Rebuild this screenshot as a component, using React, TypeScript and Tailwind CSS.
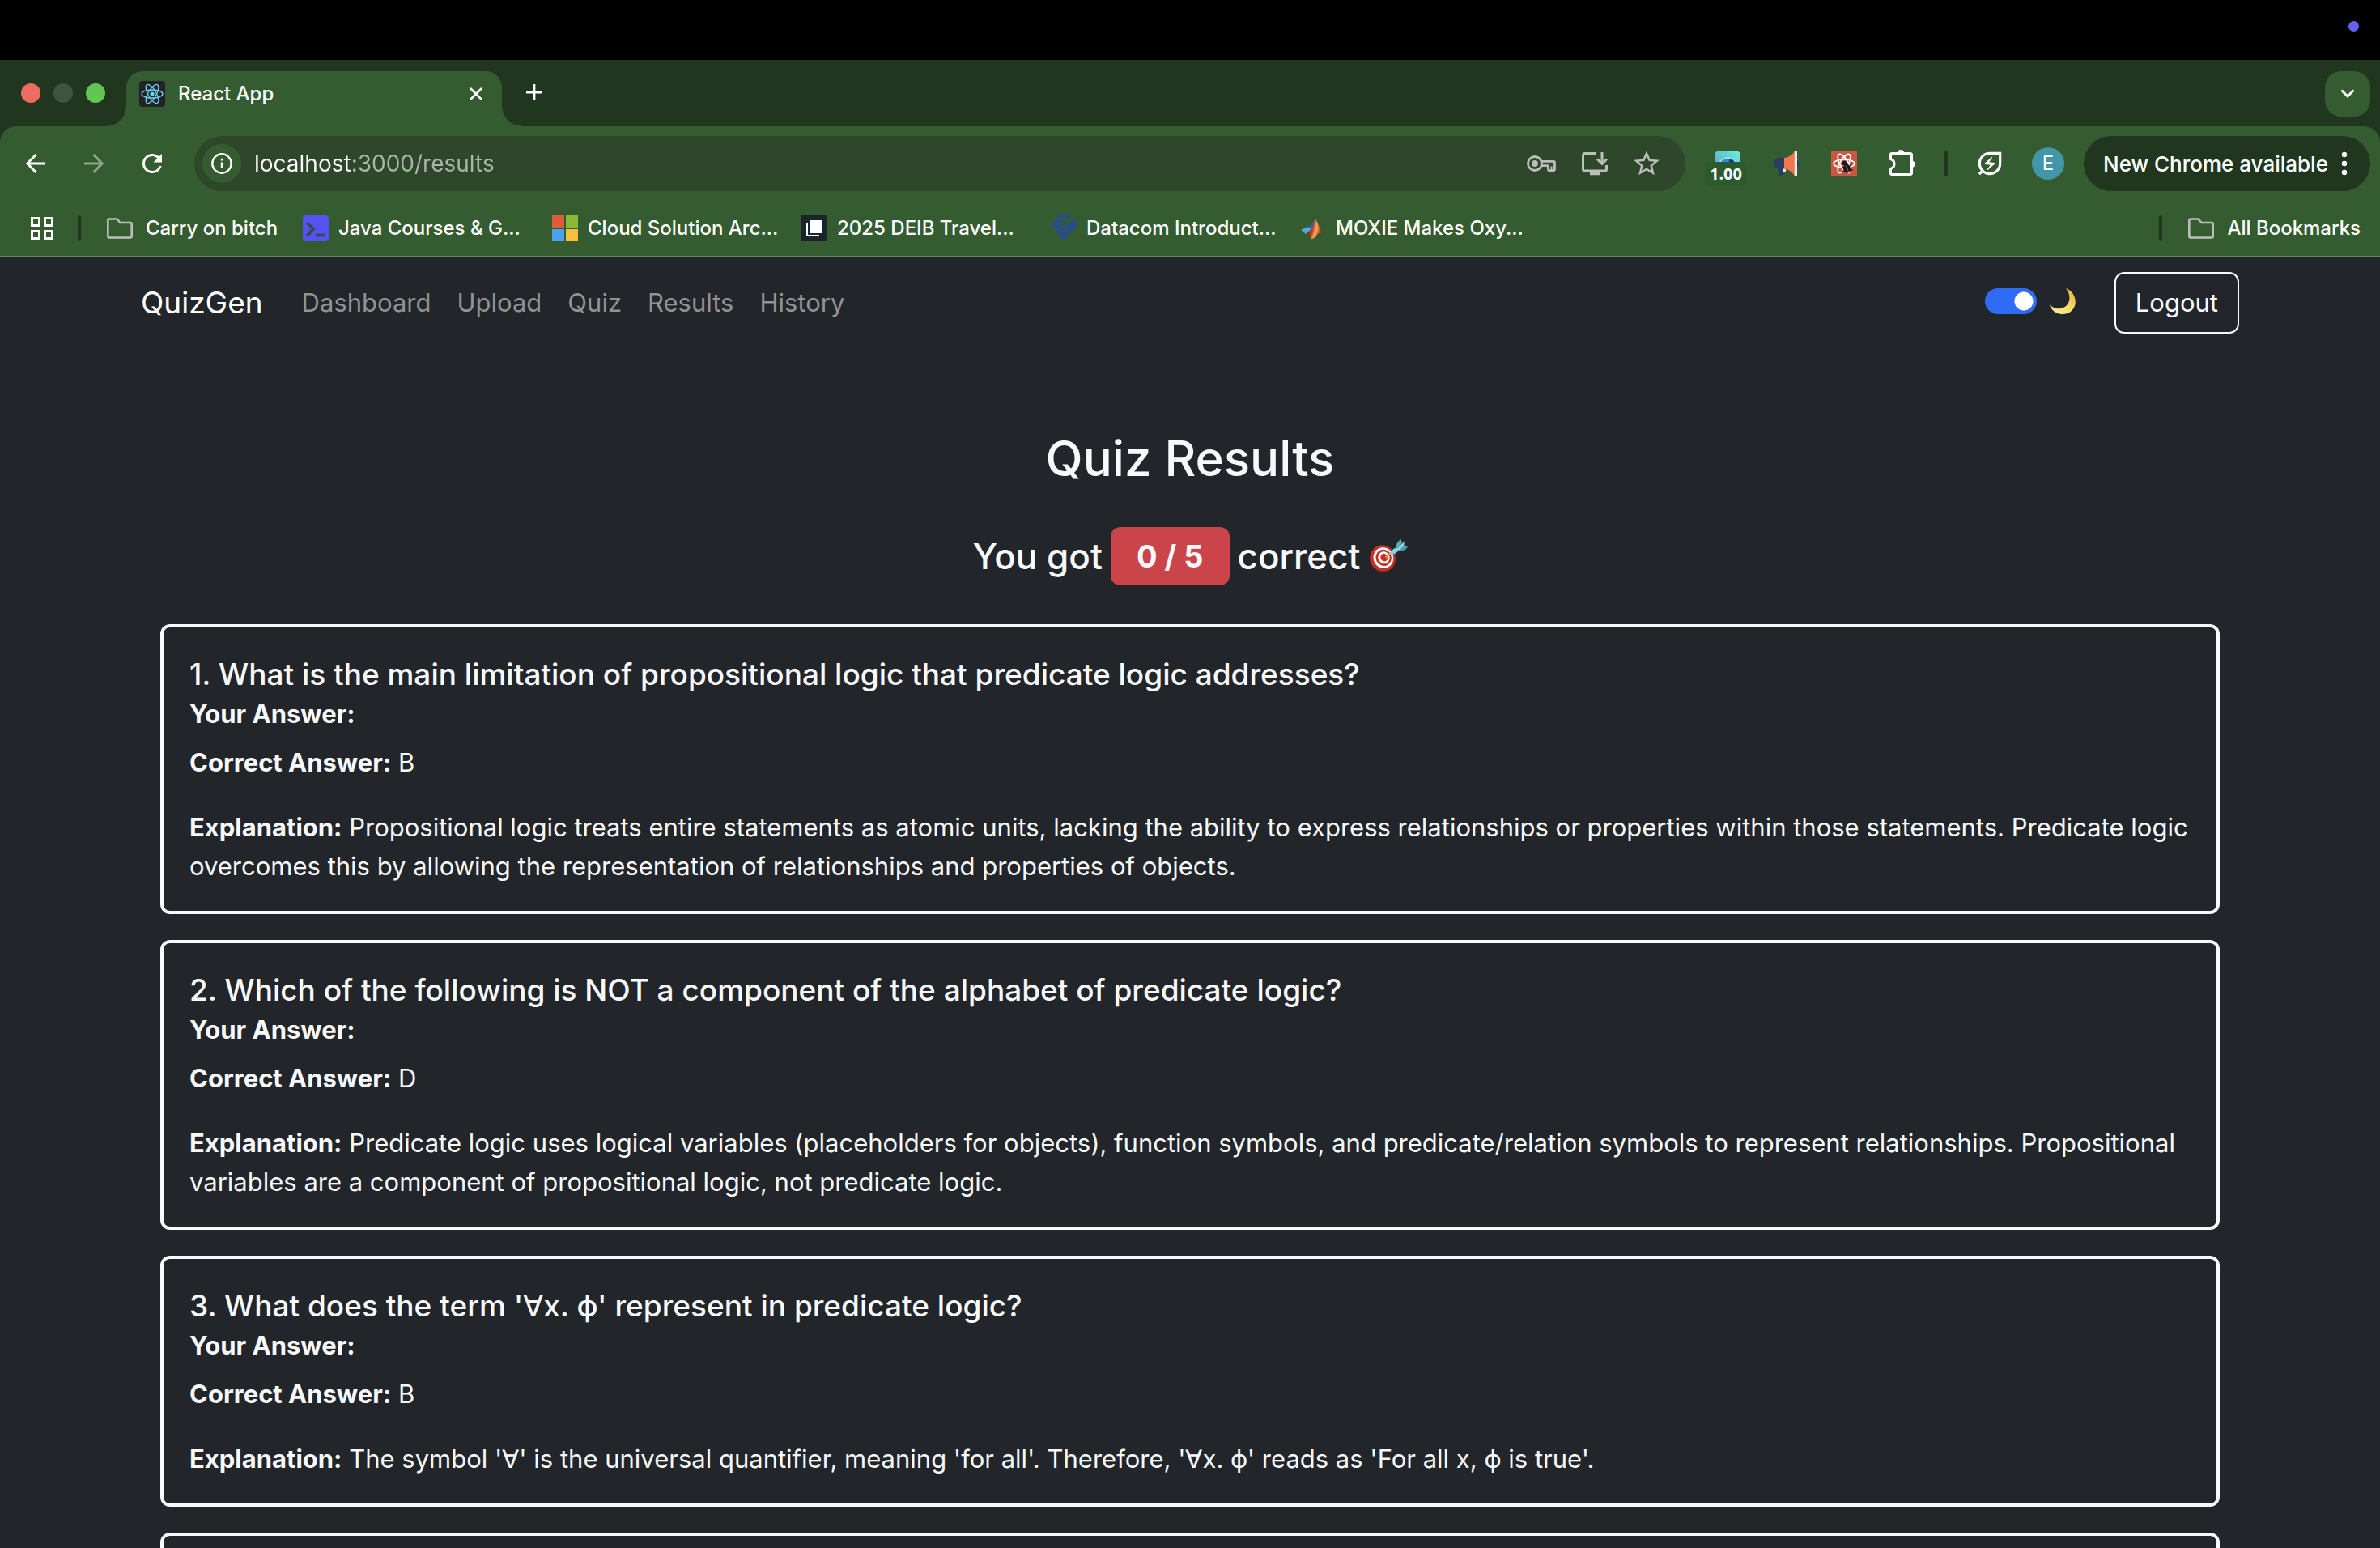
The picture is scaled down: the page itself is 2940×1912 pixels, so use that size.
import type { ReactNode } from "react";
import { MdOutlineEnergySavingsLeaf, MdRefresh, MdStarBorder } from "react-icons/md";

function Arrow({ className }: { className: string }) {
  return (
    <svg viewBox="0 0 32 32" className={className} fill="none" stroke="currentColor" strokeWidth="3">
      <path d="M28 16H6.500M16.500 5 5.800 16l10.700 11" />
    </svg>
  );
}

function Orbits({ stroke, width }: { stroke: string; width: number }) {
  return (
    <g fill="none" stroke={stroke} strokeWidth={width}>
      <ellipse cx="16" cy="16" rx="13" ry="5" />
      <ellipse cx="16" cy="16" rx="13" ry="5" transform="rotate(60 16 16)" />
      <ellipse cx="16" cy="16" rx="13" ry="5" transform="rotate(120 16 16)" />
    </g>
  );
}

function ReactFavicon() {
  return (
    <svg viewBox="0 0 32 32" className="size-8">
      <rect width="32" height="32" rx="4" fill="#222327" />
      <Orbits stroke="#6fd3f2" width={1.3} />
      <circle cx="16" cy="16" r="2.600" fill="#6fd3f2" />
    </svg>
  );
}

function InfoIcon() {
  return (
    <svg viewBox="0 0 26 26" className="size-[26px]" fill="none" stroke="#fff" strokeWidth="2.400">
      <circle cx="13" cy="13" r="11.700" />
      <path d="M13 11.500V19M13 6.800v2.600" />
    </svg>
  );
}

function KeyIcon() {
  return (
    <svg viewBox="0 0 36 20" className="h-5 w-9" fill="none" stroke="#bdbdbd" strokeWidth="2.800">
      <circle cx="10" cy="10" r="8.500" />
      <circle cx="10" cy="10" r="3.900" fill="#bdbdbd" stroke="none" />
      <path d="M17.500 7.400H33a1.500 1.500 0 0 1 1.500 1.500v8.200a1.500 1.500 0 0 1-1.500 1.500h-5a1.500 1.500 0 0 1-1.500-1.500v-4.500h-9" />
      <path d="M30.500 13.500V18" strokeWidth="2" />
    </svg>
  );
}

function InstallIcon() {
  return (
    <svg viewBox="0 0 32 30" className="h-[30px] w-8" fill="none" stroke="#bdbdbd" strokeWidth="3">
      <path d="M18 2.500H3.500a2 2 0 0 0-2 2V22a2 2 0 0 0 2 2h25a2 2 0 0 0 2-2v-5" />
      <path d="M10 26.800h12" strokeWidth="5" />
      <path d="M25 1v14M19 9.500l6 6 6-6" />
    </svg>
  );
}

function CaptureIcon() {
  return (
    <svg viewBox="0 0 32 32" className="size-8">
      <defs>
        <linearGradient id="capture" x1="0" y1="1" x2="1" y2="0">
          <stop offset="0" stopColor="#4a9fc4" />
          <stop offset="1" stopColor="#74efdc" />
        </linearGradient>
      </defs>
      <rect width="32" height="32" rx="6" fill="url(#capture)" />
      <circle cx="16" cy="20" r="11" fill="#2f8fc0" stroke="#9fe6ea" strokeWidth="1.500" />
      <path d="M18 10a9 9 0 0 1 7.500 6L18 15z" fill="#123a86" />
    </svg>
  );
}

function MegaphoneIcon() {
  return (
    <svg viewBox="0 0 32 32" className="size-8">
      <path d="M29 12a4 4 0 0 1 0 8z" fill="#2b3d5f" />
      <path d="M6 21h7l-1.500 9.500a1.500 1.500 0 0 1-1.500 1.500H8.200a1.500 1.500 0 0 1-1.400-1.500z" fill="#2b3d5f" />
      <path d="M7 9h7.500v13.500H7A6.800 6.800 0 0 1 7 9z" fill="#2b3d5f" />
      <path d="M12 22.500h4V26h-3z" fill="#e8eef5" />
      <path d="M14 9c6-.5 10.500-4 13-8.500v31C24.500 27 20 23 14 22.500z" fill="#f1764a" />
      <rect x="26.800" width="3.200" height="32" rx="1.400" fill="#dfe8f3" />
    </svg>
  );
}

function ReactDebugIcon() {
  return (
    <svg viewBox="0 0 32 32" className="size-8">
      <rect width="32" height="32" rx="2.500" fill="#cb5643" />
      <Orbits stroke="#fff" width={1.7} />
      <g fill="#1c1a1c" stroke="#1c1a1c" strokeWidth="1.400">
        <circle cx="16.500" cy="15.500" r="2.800" stroke="none" />
        <ellipse cx="19.500" cy="22.500" rx="4.500" ry="5.500" transform="rotate(-28 19.500 22.500)" stroke="none" />
        <path d="M13 20.500l4 1M13.500 26.500l4-2M19 29l1-3M20.500 15.500l.5 4M25 17l-3 3M26.500 24l-4-1" />
      </g>
      <path d="M18.500 19l3 7" stroke="#cb5643" strokeWidth="1" />
    </svg>
  );
}

function PuzzleIcon() {
  return (
    <svg viewBox="0 0 36 34" className="h-[34px] w-9 shrink-0" fill="none" stroke="#fff" strokeWidth="3">
      <path d="M3.500 11.500V6A1.500 1.500 0 0 1 5 4.500h23A1.500 1.500 0 0 1 29.500 6v23a1.500 1.500 0 0 1-1.500 1.500H5A1.500 1.500 0 0 1 3.500 29v-5.500c3-1 4.500-3.200 4.500-6s-1.500-5-4.500-6z" />
      <path d="M11.500 4.500a4.500 4.500 0 0 1 9 0zM29.500 13.500a4.300 4.300 0 0 1 0 8.600z" fill="#fff" stroke="none" />
    </svg>
  );
}

function FolderIcon() {
  return (
    <svg viewBox="0 0 32 26" className="h-[26px] w-8" fill="none" stroke="#bdbdbd" strokeWidth="2.600">
      <path d="M3 1.500h9.500l4 4.500H29a1.700 1.700 0 0 1 1.700 1.700V22.800A1.700 1.700 0 0 1 29 24.500H3a1.700 1.700 0 0 1-1.700-1.700V3.200A1.700 1.700 0 0 1 3 1.500z" />
    </svg>
  );
}

function AppsIcon() {
  return (
    <svg viewBox="0 0 32 32" className="size-8" fill="none" stroke="#fff" strokeWidth="3">
      <path d="M3.500 3.500h9v9h-9zM19.500 3.500h9v9h-9zM3.500 19.500h9v9h-9zM19.500 19.500h9v9h-9z" />
    </svg>
  );
}

function TerminalIcon() {
  return (
    <svg viewBox="0 0 32 32" className="size-8">
      <rect width="32" height="32" rx="4" fill="#5551f2" />
      <path d="M5.500 9.500 13 16.500l-7.500 8.500M16 24.500h11" fill="none" stroke="#2f5040" strokeWidth="3.600" />
    </svg>
  );
}

function MicrosoftIcon() {
  return (
    <svg viewBox="0 0 32 32" className="size-8">
      <rect width="15" height="15" fill="#e05c36" />
      <rect x="17" width="15" height="15" fill="#8ab937" />
      <rect y="17" width="15" height="15" fill="#4ba2ea" />
      <rect x="17" y="17" width="15" height="15" fill="#f5bd42" />
    </svg>
  );
}

function PagesIcon() {
  return (
    <svg viewBox="0 0 32 32" className="size-8">
      <rect width="32" height="32" fill="#1a252b" />
      <rect x="10" y="6" width="16" height="16" fill="#fff" />
      <path d="M7 10v15h15" fill="none" stroke="#fff" strokeWidth="2" />
    </svg>
  );
}

function DatacomIcon() {
  return (
    <svg viewBox="0 0 32 32" className="size-8" fill="#264c8c">
      <path d="M8 0h18c-1 2-4 4-7 5.500C15 3.500 10 2.500 5 3z" />
      <path d="M0 9.500C4 5 11 5 17 8c-2 5-5 7.500-10 7.500-4 0-7-2.500-7-6z" />
      <path d="M28 4l4 5.500c-.5 5-4 9-8.500 13.500-2-3-4-6-7-9C20 12 24 8 28 4z" />
      <path d="M6 17.500c4 0 7-.5 9.500-2 2.500 2 5 5 6.500 8.500-1 3-3 5-6 6.500C11 27 8 22 6 17.500z" />
    </svg>
  );
}

function MatlabIcon() {
  return (
    <svg viewBox="0 0 32 32" className="size-8">
      <defs>
        <linearGradient id="peak" x1="0" y1="0" x2="1" y2="0.300">
          <stop offset="0" stopColor="#5b1a16" />
          <stop offset="0.450" stopColor="#b8402a" />
          <stop offset="0.650" stopColor="#f0a24e" />
          <stop offset="1" stopColor="#b2281e" />
        </linearGradient>
      </defs>
      <path d="M1 18l9-4 4 3-7 6z" fill="#5aa3dc" />
      <path d="M10 14c3-1 6-6 9-10l-2 10-3 4z" fill="#3b5f9e" />
      <path d="M19 4c3 5 6 15 9 20-3-3-5-3-7 0s-4 5-8 6c0-4-2-6-4-7 5-3 7-11 10-19z" fill="url(#peak)" />
      <path d="M19 5c1 8 0 14-6 24 5-1 8-7 9-11z" fill="#f2a853" opacity="0.650" />
    </svg>
  );
}

function MoonIcon() {
  return (
    <svg viewBox="0 0 32 32" className="size-8">
      <defs>
        <linearGradient id="moon" x1="0" y1="1" x2="1" y2="0">
          <stop offset="0" stopColor="#fdf0a0" />
          <stop offset="0.500" stopColor="#f7dc6c" />
          <stop offset="1" stopColor="#d9ad3c" />
        </linearGradient>
      </defs>
      <path d="M20 0C28 3 32 10 31.800 17.500 31.500 26 24.500 32 16 32 8.500 32 2.500 28 0 20.500c4.500 4.500 11 6 17 3.500C25.500 20 27 9 20 0z" fill="url(#moon)" />
    </svg>
  );
}

function TargetIcon() {
  return (
    <svg viewBox="0 0 48 41" className="h-[41px] w-12">
      <circle cx="17.500" cy="24.500" r="16.300" fill="#7d1a14" />
      <g transform="rotate(-25 17 23.500)">
        <ellipse cx="17" cy="23.500" rx="15.500" ry="16.300" fill="#c3302a" />
        <ellipse cx="18" cy="23.500" rx="12.200" ry="13" fill="#fff" />
        <ellipse cx="18.300" cy="23.500" rx="9.600" ry="10.200" fill="#c3302a" />
        <ellipse cx="18.600" cy="23.500" rx="7" ry="7.600" fill="#fff" />
        <ellipse cx="19" cy="23.500" rx="4.400" ry="4.900" fill="#c3302a" />
      </g>
      <path d="M20.500 22.500l8-6" stroke="#d9a22f" strokeWidth="2.200" />
      <path d="M25.500 18.500c0-2.500 3.500-6 8.500-8.500l3 3.500c-3 4-7.500 6.500-11.500 5z" fill="#7ed3df" />
      <path d="M33.500 11.500c-.5-4.500 1.500-8.500 6-11.500l1.500 4-3.500 8.500z" fill="#5aa9b5" />
      <path d="M36 13.500c2-4.500 4.500-6 7.500-6.500l4.500 2.500c-2.500 4-6 5.500-10.500 5z" fill="#4a9fab" />
      <path d="M34.500 12.500L44 2.500l-1 5.500-5.500 5.500z" fill="#8fdbe4" />
    </svg>
  );
}

function Bookmark({ icon, children }: { icon: ReactNode; children: ReactNode }) {
  return (
    <a href="#bookmark" className="flex w-[308px] items-center gap-3 whitespace-nowrap">
      {icon}
      {children}
    </a>
  );
}

function IconButton({ label, children }: { label: string; children: ReactNode }) {
  return (
    <button type="button" aria-label={label} className="flex size-8 shrink-0 items-center justify-center">
      {children}
    </button>
  );
}

function BrowserChrome() {
  return (
    <header className="shrink-0 text-white">
      <div className="flex h-[74px] items-start justify-end bg-black px-[26px] pt-[26px]">
        <span className="size-[13px] rounded-full bg-[#6461ec]" />
      </div>

      <div className="bg-[#21361f]">
        <div className="flex h-[82px] items-end pr-3 pl-[26px]">
          <div className="mr-[26px] flex gap-4 self-center">
            <span className="size-6 rounded-full bg-[#ed6b60]" />
            <span className="size-6 rounded-full bg-[#3f543c]" />
            <span className="size-6 rounded-full bg-[#62c655]" />
          </div>
          <div className="relative flex h-[68px] w-[464px] items-center rounded-t-[20px] bg-[#355c30] pr-4 pb-3 pl-4">
            <span className="absolute bottom-0 -left-6 size-6 bg-[radial-gradient(circle_at_0_0,transparent_23px,#355c30_24px)]" />
            <span className="absolute -right-6 bottom-0 size-6 bg-[radial-gradient(circle_at_100%_0,transparent_23px,#355c30_24px)]" />
            <ReactFavicon />
            <span className="ml-4 flex-1 text-[24px] font-medium">React App</span>
            <IconButton label="Close tab">
              <svg viewBox="0 0 16 16" className="size-4" stroke="#fff" strokeWidth="2.600">
                <path d="M1 1l14 14M15 1L1 15" />
              </svg>
            </IconButton>
          </div>
          <div className="mb-[26px] ml-6 flex-1">
            <IconButton label="New tab">
              <svg viewBox="0 0 20 20" className="size-5" stroke="#fff" strokeWidth="2.800">
                <path d="M10 0v20M0 10h20" />
              </svg>
            </IconButton>
          </div>
          <button
            type="button"
            aria-label="Search tabs"
            className="mb-3 flex size-14 items-center justify-center rounded-[20px] bg-[#355c30]"
          >
            <svg viewBox="0 0 18 12" className="h-3 w-[18px]" fill="none" stroke="#fff" strokeWidth="3">
              <path d="M1.500 1.500L9 9l7.500-7.500" />
            </svg>
          </button>
        </div>

        <div className="rounded-t-[20px] border-b-2 border-[#5f8159] bg-[#355c30]">
          <div className="flex h-[92px] items-center pr-3 pl-7">
            <div className="flex gap-10">
              <IconButton label="Back">
                <Arrow className="size-8" />
              </IconButton>
              <IconButton label="Forward">
                <Arrow className="size-8 rotate-180 opacity-45" />
              </IconButton>
              <IconButton label="Reload">
                <MdRefresh className="size-9 shrink-0" />
              </IconButton>
            </div>
            <div className="mx-9 flex h-[68px] flex-1 items-center rounded-full bg-[#2e472b] pr-8 pl-[10px]">
              <button
                type="button"
                aria-label="Site information"
                className="flex size-12 items-center justify-center rounded-full bg-[#355c30]"
              >
                <InfoIcon />
              </button>
              <input
                aria-label="Address"
                readOnly
                value="localhost:3000/results"
                className="ml-4 h-12 flex-1 bg-[linear-gradient(to_right,#ffffff_120px,#aab6a8_120px)] bg-clip-text text-[28px] text-transparent outline-none"
              />
              <div className="flex items-center gap-8">
                <KeyIcon />
                <InstallIcon />
                <MdStarBorder className="-mx-[3px] size-[38px] text-[#bdbdbd]" />
              </div>
            </div>
            <div className="flex items-center gap-10">
              <div className="relative size-8">
                <CaptureIcon />
                <span className="absolute top-[14px] -left-3 flex h-[30px] w-[52px] items-center justify-center rounded-lg bg-[#2a5a2e] font-['Open_Sans'] text-[20px] font-bold">
                  1.00
                </span>
              </div>
              <MegaphoneIcon />
              <ReactDebugIcon />
              <IconButton label="Extensions">
                <PuzzleIcon />
              </IconButton>
            </div>
            <span className="mx-9 h-8 w-1 rounded-full bg-[#21361f]" />
            <IconButton label="Energy saver">
              <MdOutlineEnergySavingsLeaf className="size-[38px] shrink-0" />
            </IconButton>
            <button
              type="button"
              className="mr-6 ml-9 flex size-10 items-center justify-center rounded-full bg-[#4296a8] text-[24px]"
            >
              E
            </button>
            <button
              type="button"
              className="flex h-[68px] w-[354px] items-center justify-between rounded-full bg-[#21361f] pr-7 pl-6 text-[26px] font-medium whitespace-nowrap"
            >
              New Chrome available
              <svg viewBox="0 0 8 30" className="h-[30px] w-2" fill="#fff">
                <circle cx="4" cy="4" r="3.200" />
                <circle cx="4" cy="15" r="3.200" />
                <circle cx="4" cy="26" r="3.200" />
              </svg>
            </button>
          </div>

          <nav aria-label="Bookmarks" className="flex h-[68px] items-center pr-6 pl-9 text-[24px] font-medium">
            <IconButton label="Apps">
              <AppsIcon />
            </IconButton>
            <span className="mr-8 ml-7 h-8 w-1 rounded-full bg-[#21361f]" />
            <a href="#folder" className="flex w-[242px] items-center gap-4 whitespace-nowrap">
              <FolderIcon />
              Carry on bitch
            </a>
            <Bookmark icon={<TerminalIcon />}>Java Courses &amp; G...</Bookmark>
            <Bookmark icon={<MicrosoftIcon />}>Cloud Solution Arc...</Bookmark>
            <Bookmark icon={<PagesIcon />}>2025 DEIB Travel...</Bookmark>
            <Bookmark icon={<DatacomIcon />}>Datacom Introduct...</Bookmark>
            <Bookmark icon={<MatlabIcon />}>MOXIE Makes Oxy...</Bookmark>
            <span className="mr-8 ml-auto h-8 w-1 rounded-full bg-[#21361f]" />
            <a href="#all" className="flex items-center gap-4 whitespace-nowrap">
              <FolderIcon />
              All Bookmarks
            </a>
          </nav>
        </div>
      </div>
    </header>
  );
}

const links = ["Dashboard", "Upload", "Quiz", "Results", "History"];

const results = [
  {
    question: "What is the main limitation of propositional logic that predicate logic addresses?",
    correct: "B",
    explanation:
      "Propositional logic treats entire statements as atomic units, lacking the ability to express relationships or properties within those statements. Predicate logic overcomes this by allowing the representation of relationships and properties of objects.",
  },
  {
    question: "Which of the following is NOT a component of the alphabet of predicate logic?",
    correct: "D",
    explanation:
      "Predicate logic uses logical variables (placeholders for objects), function symbols, and predicate/relation symbols to represent relationships. Propositional variables are a component of propositional logic, not predicate logic.",
  },
  {
    question: "What does the term '∀x. ϕ' represent in predicate logic?",
    correct: "B",
    explanation:
      "The symbol '∀' is the universal quantifier, meaning 'for all'. Therefore, '∀x. ϕ' reads as 'For all x, ϕ is true'.",
  },
];

function AppNavbar() {
  return (
    <div className="mx-auto flex h-28 w-full max-w-[2640px] items-center px-6 text-[31px]">
      <a href="#home" className="mr-12 text-[37px] text-white">
        QuizGen
      </a>
      <nav aria-label="Main" className="flex flex-1 gap-8 text-[#909294]">
        {links.map((link) => (
          <a key={link} href={"#" + link.toLowerCase()}>
            {link}
          </a>
        ))}
      </nav>
      <label className="mr-12 flex items-center gap-4 pb-1">
        <input
          type="checkbox"
          role="switch"
          aria-label="Dark mode"
          defaultChecked
          className="h-8 w-16 appearance-none rounded-full bg-[#2f6cf6] bg-[radial-gradient(circle_at_48px_16px,#ffffff_11px,transparent_12px)]"
        />
        <MoonIcon />
      </label>
      <button type="button" className="rounded-xl border-2 border-[#f8f9fa] px-6 py-3 leading-[48px]">
        Logout
      </button>
    </div>
  );
}

export default function App() {
  return (
    <div className="flex h-screen flex-col overflow-hidden bg-[#22252a] font-['Inter',sans-serif] text-[#f8f9fa]">
      <BrowserChrome />
      <div className="min-h-0 flex-1 overflow-hidden">
        <AppNavbar />
        <main className="mx-auto max-w-[2640px] px-12 pt-24">
          <h1 className="text-center text-[60px] leading-20 font-medium">Quiz Results</h1>
          <p className="mt-11 mb-12 flex h-[73px] items-center justify-center gap-[10px] text-[44px] font-medium">
            You got
            <span className="rounded-xl bg-[#cb444a] px-8 text-[38px] leading-[72px] font-bold">0 / 5</span>
            correct
            <TargetIcon />
          </p>
          <div className="flex flex-col gap-8">
            {results.map((result, index) => (
              <article
                key={result.question}
                className="rounded-xl border-4 border-[#f8f9fa] pt-8 pr-7 pb-[31px] pl-8 text-[31px] leading-[48px]"
              >
                <h2 className="text-[37px] leading-[51px] font-medium">
                  {index + 1}. {result.question}
                </h2>
                <p>
                  <strong>Your Answer:</strong>
                </p>
                <p className="mt-3">
                  <strong>Correct Answer:</strong> {result.correct}
                </p>
                <p className="mt-8">
                  <strong>Explanation:</strong> {result.explanation}
                </p>
              </article>
            ))}
            <article className="h-[310px] rounded-xl border-4 border-[#f8f9fa]" />
          </div>
        </main>
      </div>
    </div>
  );
}
